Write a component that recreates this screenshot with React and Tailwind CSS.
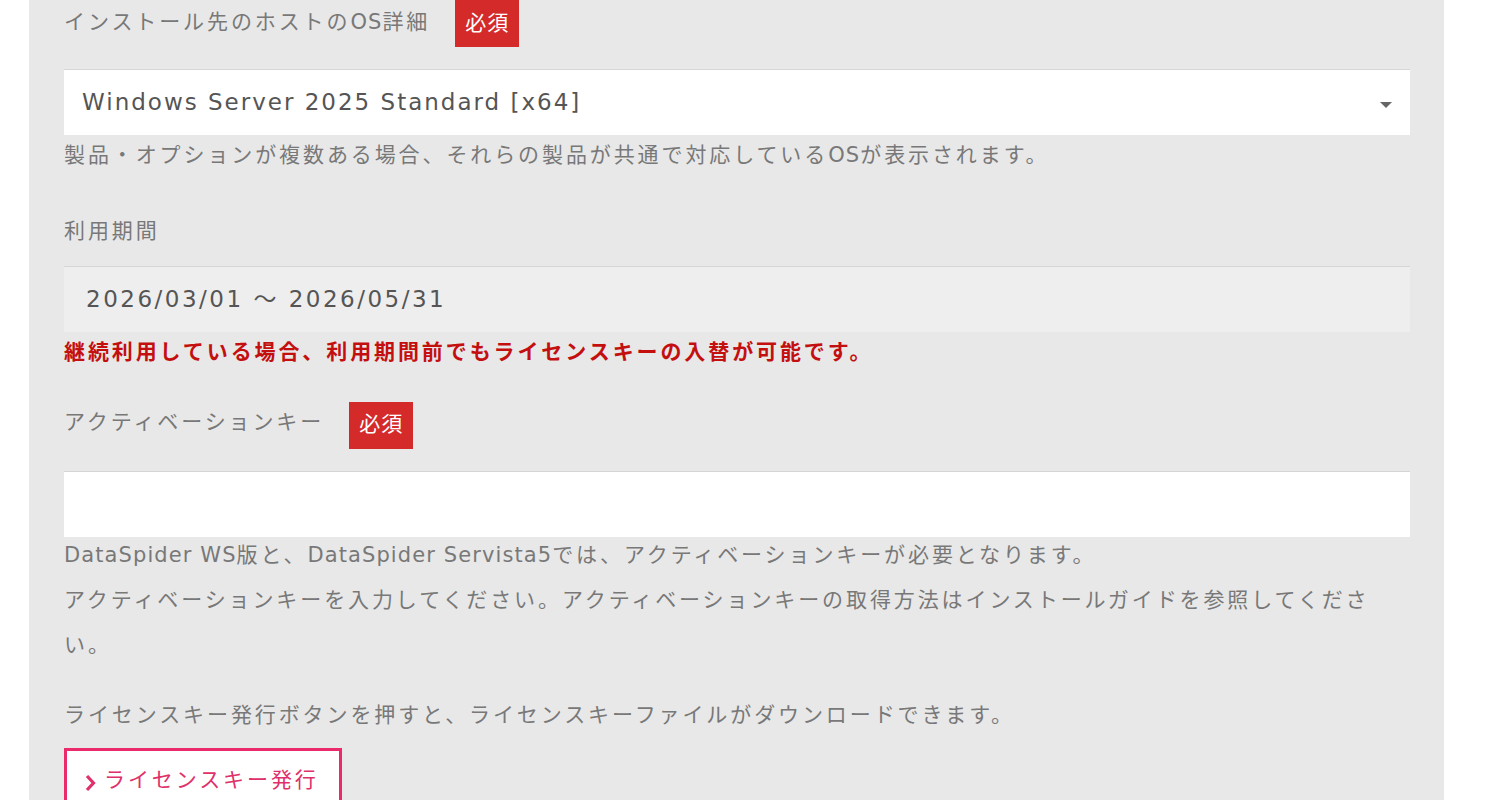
const FONT = "font-['DejaVu_Sans','Noto_Sans_CJK_JP',sans-serif]";

function Required() {
  return (
    <span className="flex h-[47px] w-[64px] items-center justify-center bg-[#d42a2a] text-[21px] tracking-[1px] text-white">
      必須
    </span>
  );
}

// latin runs keep a tighter tracking than the kana around them
function L({ children }) {
  return <span className="tracking-[1.1px]">{children}</span>;
}

export default function App() {
  return (
    <div className={`min-h-screen overflow-hidden bg-white ${FONT}`}>
      <div className="ml-[29px] w-[1415px] bg-[#e8e8e8] pb-[40px] pl-[35px] pr-[34px] text-[21px] tracking-[2.9px] text-[#787878]">
        {/* OS */}
        <div className="flex h-[47px] items-center gap-[25px]">
          <span className="-mt-[2px]">
            インストール先のホストの<L>OS</L>詳細
          </span>
          <Required />
        </div>
        <div className="mt-[22px] flex h-[66px] items-center justify-between border-t border-[#d6d6d6] bg-white pl-[18px] pr-[18px] text-[23px] tracking-[2px] text-[#555]">
          <span>Windows Server 2025 Standard [x64]</span>
          <svg width="12" height="6" viewBox="0 0 12 6" className="mt-[4px]">
            <path d="M0 0h12L6 6z" fill="#666" />
          </svg>
        </div>
        <p className="leading-[40px]">
          製品・オプションが複数ある場合、それらの製品が共通で対応している<L>OS</L>が表示されます。
        </p>

        {/* period */}
        <div className="mt-[34px] flex h-[47px] items-center">
          <span className="-mt-[2px]">利用期間</span>
        </div>
        <div className="mt-[10px] flex h-[66px] items-center border-t border-[#d6d6d6] bg-[#eeeeee] pl-[22px] text-[23px] tracking-[2.5px] text-[#555]">
          2026/03/01 〜 2026/05/31
        </div>
        <p className="font-bold leading-[40px] tracking-[2.9px] text-[#c40f0f]">
          継続利用している場合、利用期間前でもライセンスキーの入替が可能です。
        </p>

        {/* activation key */}
        <div className="mt-[29px] flex h-[48px] items-center gap-[25px]">
          <span className="-mt-[4px]">アクティベーションキー</span>
          <Required />
        </div>
        <div className="mt-[22px] h-[66px] border-t border-[#d6d6d6] bg-white" />
        <div className="-mt-[4px] pr-[24px] leading-[45px]">
          <p>
            <L>DataSpider WS</L>版と、<L>DataSpider Servista5</L>では、アクティベーションキーが必要となります。
          </p>
          <p>
            アクティベーションキーを入力してください。アクティベーションキーの取得方法はインストールガイドを参照してください。
          </p>
        </div>
        <p className="mt-[25px] leading-[45px]">ライセンスキー発行ボタンを押すと、ライセンスキーファイルがダウンロードできます。</p>

        <button
          type="button"
          className="mt-[10px] flex h-[66px] w-[278px] items-center gap-[7px] border-[3px] border-[#ea2a6b] bg-white pl-[17px] text-[21px] tracking-[2.9px] text-[#e0306a]"
        >
          <svg width="13" height="18" viewBox="0 0 13 18" className="mt-[3px]">
            <path d="M3 2l6.5 7-6.5 7" fill="none" stroke="#e0306a" strokeWidth="3.2" />
          </svg>
          <span>ライセンスキー発行</span>
        </button>
      </div>
    </div>
  );
}
